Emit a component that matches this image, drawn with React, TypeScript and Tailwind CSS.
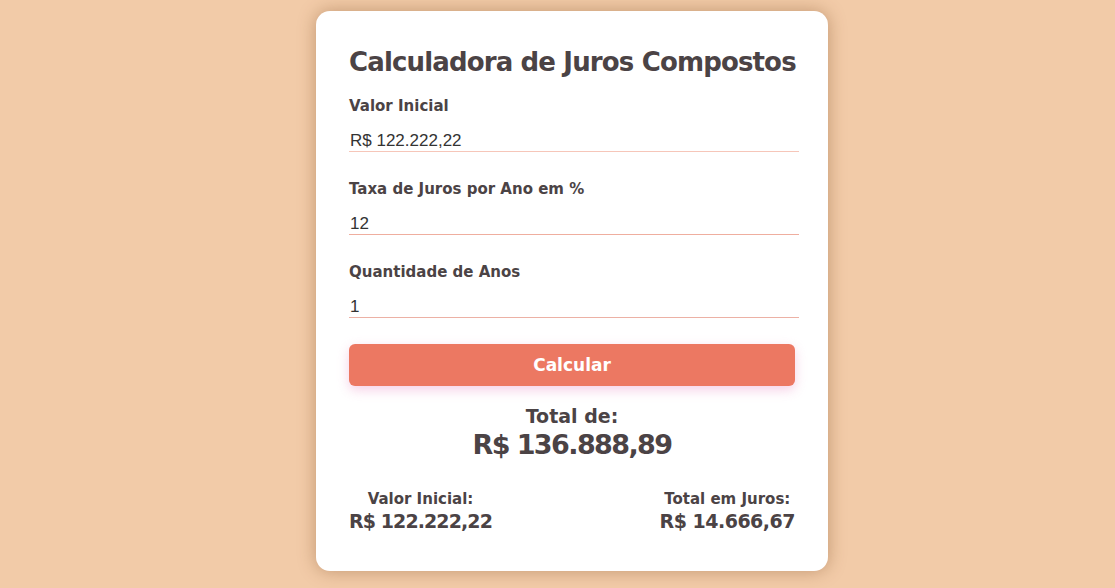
import React from "react";

const font = { fontFamily: '"DejaVu Sans", sans-serif' };

function Field({ label, value, line }: { label: string; value: string; line: string }) {
  return (
    <div className="mb-[27px]">
      <div className="h-[20px] text-[15px] leading-[20px] font-bold text-[#4b4345] mb-[6px]">{label}</div>
      <input
        readOnly
        value={value}
        className={`block w-[450px] h-[30px] pt-[8px] pb-0 px-[1px] border-b outline-none text-[17px] text-[#333] ${line}`}
        style={{ fontFamily: '"Liberation Sans", Arial, sans-serif' }}
      />
    </div>
  );
}

export default function App() {
  return (
    <div className="min-h-[588px] w-full bg-[#f2cba8] pt-[11px]" style={font}>
      <div className="ml-[316px] w-[512px] h-[560px] rounded-[14px] bg-white px-[33px] pt-[35px] shadow-[0_0_18px_rgba(120,70,30,0.4)]">
        <h1 className="h-[32px] text-[26px] leading-[32px] font-bold tracking-[-0.85px] text-[#4b4345] mb-[18px] whitespace-nowrap">
          Calculadora de Juros Compostos
        </h1>
        <Field label="Valor Inicial" value="R$ 122.222,22" line="border-[#f6c6b9]" />
        <Field label="Taxa de Juros por Ano em %" value="12" line="border-[#efae9f]" />
        <Field label="Quantidade de Anos" value="1" line="border-[#ecb1a5]" />
        <button className="block w-[446px] h-[42px] -mt-[1px] pt-[2px] rounded-[6px] bg-[#ec7862] text-white text-[17px] font-bold shadow-[0_4px_12px_rgba(235,150,200,0.45)]">
          Calcular
        </button>
        <div className="mt-[18px] text-center text-[#4b4345]">
          <div className="text-[19px] leading-[24px] font-bold">Total de:</div>
          <div className="text-[27px] leading-[34px] font-bold tracking-[-1.6px]">R$ 136.888,89</div>
        </div>
        <div className="mt-[27px] flex justify-between text-[#4b4345] w-[446px]">
          <div className="text-center">
            <div className="text-[15px] leading-[20px] font-bold">Valor Inicial:</div>
            <div className="text-[19px] leading-[24px] font-bold tracking-[-0.9px]">R$ 122.222,22</div>
          </div>
          <div className="text-center">
            <div className="text-[15px] leading-[20px] font-bold">Total em Juros:</div>
            <div className="text-[19px] leading-[24px] font-bold tracking-[-0.5px]">R$ 14.666,67</div>
          </div>
        </div>
      </div>
    </div>
  );
}
